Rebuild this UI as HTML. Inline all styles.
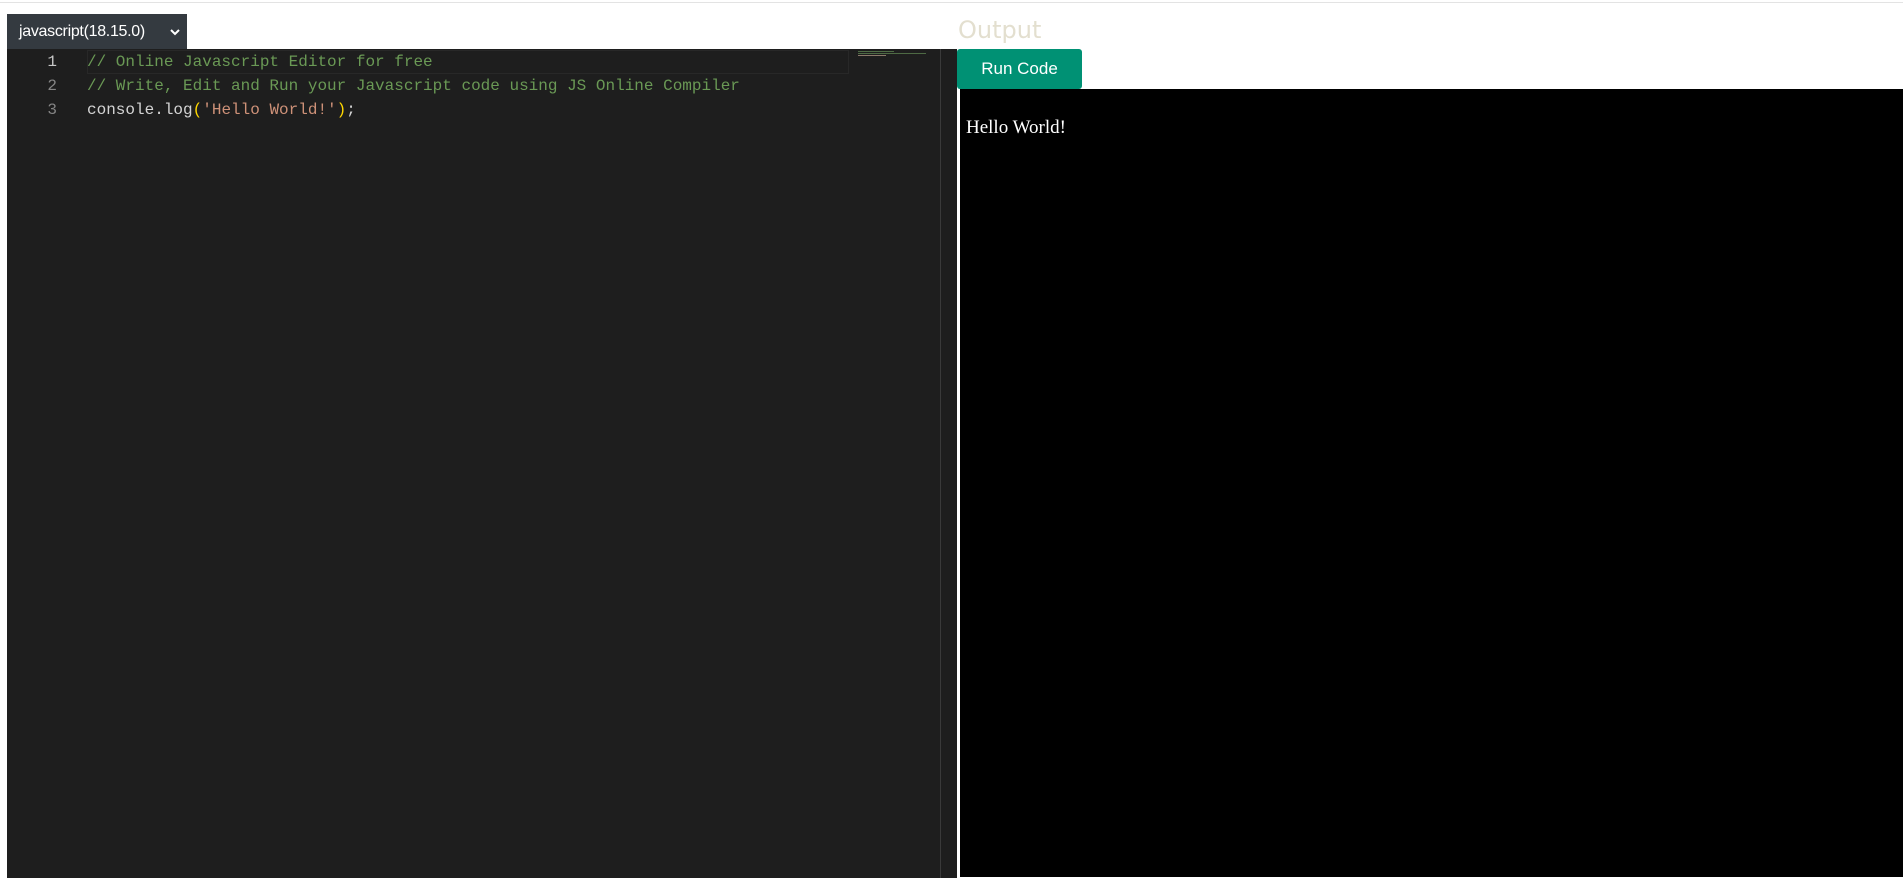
<!DOCTYPE html>
<html><head><meta charset="utf-8"><style>
body{margin:0;width:1903px;height:880px;background:#fff;position:relative;overflow:hidden;font-family:"Liberation Sans",sans-serif}
.top{position:absolute;left:0;top:2px;width:1903px;height:1px;background:#e3e3e3}
.sel{position:absolute;left:7px;top:14px;width:180px;height:35px;background:#343a40;color:#fff;font-size:16px;line-height:35px;box-sizing:border-box;padding-left:12px;letter-spacing:-0.3px}
.sel svg{position:absolute;right:6px;top:14px}
.ed{position:absolute;left:7px;top:49px;width:950px;height:829px;background:#1e1e1e}
.vl{position:absolute;left:933px;top:0;width:1px;height:829px;background:#3a3a3a}
.code{position:absolute;left:0;top:1px;font-family:"Liberation Mono",monospace;font-size:16px}
.ln{position:absolute;width:50px;text-align:right;color:#858585;height:24px;line-height:24px}
.tx{position:absolute;left:80px;white-space:pre;height:24px;line-height:24px;color:#d4d4d4}
.cur{position:absolute;left:80px;top:0;width:760px;height:22px;border:1px solid #282828}
.c{color:#6a9955}.s{color:#ce9178}.b{color:#ffd700}
.mm{position:absolute;height:1px}
.out{position:absolute;left:958px;top:16px;font-family:"Comic Sans MS","DejaVu Sans",sans-serif;font-size:24px;color:#e3dfcf}
.btn{position:absolute;left:957px;top:49px;width:125px;height:40px;background:#009174;border-radius:3px;color:#fff;font-size:17px;text-align:center;line-height:40px}
.blk{position:absolute;left:960px;top:89px;width:943px;height:788px;background:#000}
.hw{position:absolute;left:6px;top:28px;color:#fff;font-family:"Liberation Serif",serif;font-size:19px}
</style></head><body>
<div class="top"></div>
<div class="sel">javascript(18.15.0)<svg width="12" height="8" viewBox="0 0 12 8"><path d="M2 2l4 4 4-4" stroke="#fff" stroke-width="2" fill="none"/></svg></div>
<div class="ed"><div class="vl"></div>
<div class="mm" style="left:851px;top:2px;width:36px;background:#4e6a44"></div>
<div class="mm" style="left:851px;top:4px;width:68px;background:#4e6a44"></div>
<div class="mm" style="left:851px;top:6px;width:28px;background:#8a7a6a"></div>
<div class="code">
<div class="cur"></div>
<div class="ln" style="top:0;color:#c6c6c6">1</div><div class="tx c" style="top:0">// Online Javascript Editor for free</div>
<div class="ln" style="top:24px">2</div><div class="tx c" style="top:24px">// Write, Edit and Run your Javascript code using JS Online Compiler</div>
<div class="ln" style="top:48px">3</div><div class="tx" style="top:48px">console.log<span class="b">(</span><span class="s">'Hello World!'</span><span class="b">)</span>;</div>
</div></div>
<div class="out">Output</div>
<div class="btn">Run Code</div>
<div class="blk"><div class="hw">Hello World!</div></div>
</body></html>
